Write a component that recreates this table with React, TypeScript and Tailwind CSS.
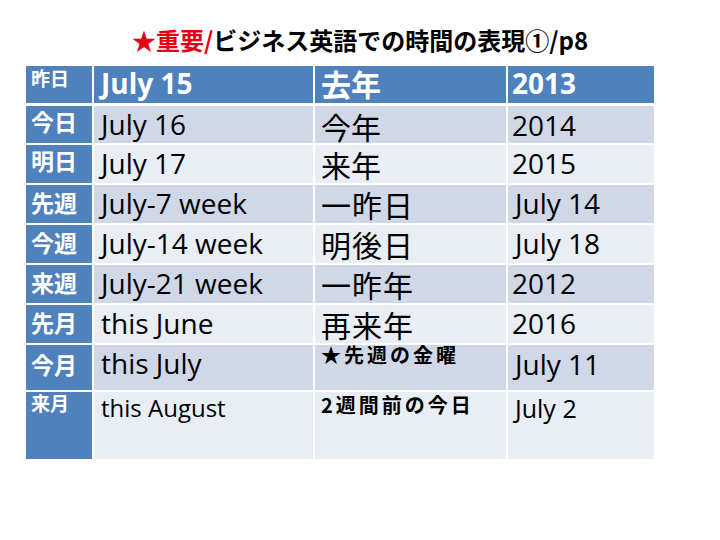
const latin = { fontFamily: '"Open Sans", "Noto Sans CJK JP", sans-serif' };
const cjk = { fontFamily: '"Noto Sans CJK JP", "Open Sans", sans-serif' };

type Row = {
  h: string;
  bg: string;
  key: string;
  keyCls: string;
  en: string;
  enCls: string;
  ja: string;
  jaCls: string;
  num: string;
  numCls: string;
};

const DARK = 'bg-[#d0d8e8]';
const LIGHT = 'bg-[#e9edf4]';

const rows: Row[] = [
  { h: 'h-[37px]', bg: 'bg-[#4f81bd]', key: '昨日', keyCls: 'text-[19px] leading-[24px]', en: 'July 15', enCls: 'text-[28px] leading-[34px] font-bold text-white', ja: '去年', jaCls: 'text-[30px] leading-[30px] pt-[2px] font-bold text-white', num: '2013', numCls: 'text-[28px] leading-[34px] font-bold text-white' },
  { h: 'h-[37px]', bg: DARK, key: '今日', keyCls: 'text-[23px] leading-[30px]', en: 'July 16', enCls: 'text-[28px] leading-[34px] pt-[1px]', ja: '今年', jaCls: 'text-[30px] leading-[30px] pt-[5px]', num: '2014', numCls: 'text-[28px] leading-[34px] pt-[2px]' },
  { h: 'h-[38px]', bg: LIGHT, key: '明日', keyCls: 'text-[23px] leading-[30px]', en: 'July 17', enCls: 'text-[28px] leading-[34px] pt-[1px]', ja: '来年', jaCls: 'text-[30px] leading-[30px] pt-[4px]', num: '2015', numCls: 'text-[28px] leading-[34px] pt-[1px]' },
  { h: 'h-[38px]', bg: DARK, key: '先週', keyCls: 'text-[23px] leading-[30px] pt-[2px]', en: 'July-7 week', enCls: 'text-[28px] leading-[34px] pt-[1px]', ja: '一昨日', jaCls: 'text-[30px] leading-[30px] pt-[4px] tracking-[1px]', num: 'July 14', numCls: 'text-[28px] leading-[34px] pt-[1px] pl-[3px]' },
  { h: 'h-[38px]', bg: LIGHT, key: '今週', keyCls: 'text-[23px] leading-[30px] pt-[2px]', en: 'July-14 week', enCls: 'text-[28px] leading-[34px] pt-[1px]', ja: '明後日', jaCls: 'text-[30px] leading-[30px] pt-[4px] tracking-[1px]', num: 'July 18', numCls: 'text-[28px] leading-[34px] pt-[1px] pl-[3px]' },
  { h: 'h-[38px]', bg: DARK, key: '来週', keyCls: 'text-[23px] leading-[30px] pt-[2px]', en: 'July-21 week', enCls: 'text-[28px] leading-[34px] pt-[1px]', ja: '一昨年', jaCls: 'text-[30px] leading-[30px] pt-[4px] tracking-[1px]', num: '2012', numCls: 'text-[28px] leading-[34px] pt-[1px]' },
  { h: 'h-[38px]', bg: LIGHT, key: '先月', keyCls: 'text-[23px] leading-[30px] pt-[2px]', en: 'this June', enCls: 'text-[28px] leading-[34px] pt-[1px]', ja: '再来年', jaCls: 'text-[30px] leading-[30px] pt-[4px] tracking-[1px]', num: '2016', numCls: 'text-[28px] leading-[34px] pt-[1px]' },
  { h: 'h-[45px]', bg: DARK, key: '今月', keyCls: 'text-[23px] leading-[30px] pt-[4px]', en: 'this July', enCls: 'text-[28px] leading-[34px] pt-[1px]', ja: '★先週の金曜', jaCls: 'text-[20px] leading-[20px] font-bold tracking-[3px]', num: 'July 11', numCls: 'text-[28px] leading-[34px] pt-[2px] pl-[3px]' },
  { h: 'h-[67px]', bg: LIGHT, key: '来月', keyCls: 'text-[19px] leading-[22px]', en: 'this August', enCls: 'text-[24px] leading-[30px] pt-[1px]', ja: '2週間前の今日', jaCls: 'text-[20px] leading-[24px] pt-[1px] font-bold tracking-[3px]', num: 'July 2', numCls: 'text-[25px] leading-[30px] pt-[1px] pl-[3px]' },
];

export default function App() {
  return (
    <div className="w-[720px] h-[540px] bg-white text-black overflow-hidden">
      {/* Title */}
      <div className="pt-[25px] text-center text-[24px] leading-[30px] font-bold" style={cjk}>
        <span className="text-[#e60012]">★重要/</span>
        <span>ビジネス英語での時間の表現①/p8</span>
      </div>

      {/* Table */}
      <div className="ml-[26px] mt-[11px] w-[628px] flex flex-col">
        {rows.map((r, i) => (
          <div
            key={r.key}
            className={`grid grid-cols-[66px_219px_191px_146px] gap-x-[2px] ${r.h} ${i === 0 ? 'mb-[3px]' : 'mb-[2px]'}`}
          >
            <div className="bg-[#4f81bd] pl-[5px] text-white font-bold" style={cjk}>
              <div className={r.keyCls}>{r.key}</div>
            </div>
            <div className={`${r.bg} pl-[7px] whitespace-nowrap`} style={latin}>
              <div className={r.enCls}>{r.en}</div>
            </div>
            <div className={`${r.bg} pl-[6px] whitespace-nowrap`} style={cjk}>
              <div className={r.jaCls}>{r.ja}</div>
            </div>
            <div className={`${r.bg} pl-[4px] whitespace-nowrap`} style={latin}>
              <div className={r.numCls}>{r.num}</div>
            </div>
          </div>
        ))}
      </div>
    </div>
  );
}
